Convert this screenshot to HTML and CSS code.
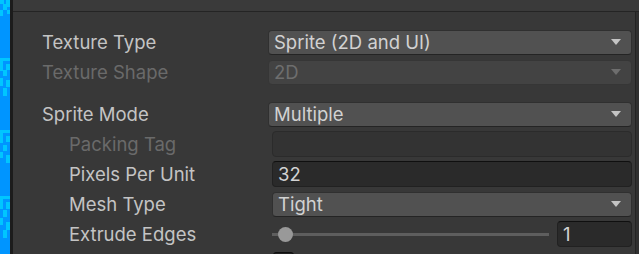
FILE: index.html
```html
<!DOCTYPE html>
<html lang="en">
<head>
  <meta charset="UTF-8">
  <title>Texture Import Settings</title>
  <link rel="stylesheet" href="styles.css">
</head>
<body>

  <!-- Scene view edge (pixel art) -->
  <div class="scene-strip">
    <svg width="10" height="254" viewBox="0 0 10 254" shape-rendering="crispEdges">
      <rect x="0" y="0" width="10" height="254" fill="#0095ff"/>
      <g fill="#00c6ff">
        <rect x="0" y="0" width="4" height="4"/>
        <rect x="6" y="0" width="4" height="7"/>
        <rect x="3" y="4" width="4" height="6"/>
        <rect x="0" y="10" width="3" height="6"/>
        <rect x="7" y="10" width="3" height="4"/>

        <rect x="0" y="58" width="10" height="3"/>
        <rect x="0" y="61" width="3" height="10"/>
        <rect x="6" y="64" width="4" height="6"/>
        <rect x="3" y="70" width="4" height="6"/>
        <rect x="0" y="78" width="3" height="8"/>
        <rect x="6" y="80" width="4" height="7"/>
        <rect x="3" y="88" width="4" height="8"/>

        <rect x="0" y="130" width="10" height="3"/>
        <rect x="0" y="133" width="3" height="10"/>
        <rect x="6" y="136" width="4" height="6"/>
        <rect x="3" y="145" width="4" height="6"/>
        <rect x="0" y="152" width="3" height="6"/>
        <rect x="6" y="155" width="4" height="8"/>

        <rect x="0" y="196" width="10" height="3"/>
        <rect x="0" y="199" width="3" height="10"/>
        <rect x="6" y="202" width="4" height="7"/>
        <rect x="3" y="210" width="4" height="7"/>
        <rect x="0" y="218" width="3" height="7"/>
        <rect x="6" y="222" width="4" height="8"/>
        <rect x="3" y="230" width="4" height="8"/>
      </g>
    </svg>
  </div>

  <div class="inspector">
    <div class="inspector-top"></div>

    <div class="inspector-body">
      <div class="settings">

        <div class="row">
          <span class="label">Texture Type</span>
          <div class="popup">
            <span>Sprite (2D and UI)</span>
            <span class="arrow"></span>
          </div>
        </div>

        <div class="row disabled">
          <span class="label">Texture Shape</span>
          <div class="popup">
            <span>2D</span>
            <span class="arrow"></span>
          </div>
        </div>

        <div class="row spaced">
          <span class="label">Sprite Mode</span>
          <div class="popup">
            <span>Multiple</span>
            <span class="arrow"></span>
          </div>
        </div>

        <div class="row indent disabled">
          <span class="label">Packing Tag</span>
          <div class="field"></div>
        </div>

        <div class="row indent">
          <span class="label">Pixels Per Unit</span>
          <div class="field">32</div>
        </div>

        <div class="row indent">
          <span class="label">Mesh Type</span>
          <div class="popup">
            <span>Tight</span>
            <span class="arrow"></span>
          </div>
        </div>

        <div class="row indent">
          <span class="label">Extrude Edges</span>
          <div class="slider">
            <div class="track">
              <span class="knob"></span>
            </div>
            <div class="field small">1</div>
          </div>
        </div>

        <div class="row indent">
          <span class="label"></span>
          <div class="check"></div>
        </div>

      </div>
      <div class="scrollbar"></div>
    </div>
  </div>

</body>
</html>
```

FILE: styles.css
```css
html, body {
  height: 100%;
}

body {
  margin: 0;
  display: flex;
  overflow: hidden;
  background: #383838;
  font-family: Inter, "Noto Sans", sans-serif;
  font-size: 18.5px;
  color: #c4c4c4;
}

.scene-strip {
  width: 10px;
  border-right: 3px solid #1c1c1c;
  flex-shrink: 0;
}

.scene-strip svg {
  display: block;
}

.inspector {
  flex: 1;
  display: flex;
  flex-direction: column;
}

.inspector-top {
  height: 11px;
  flex-shrink: 0;
  background: #3a3a3a;
  border-bottom: 1px solid #242424;
}

.inspector-body {
  flex: 1;
  display: flex;
}

.settings {
  flex: 1;
  padding: 15px 3px 0 29px;
}

.scrollbar {
  width: 3px;
  background: #303030;
  border-left: 1px solid #232323;
}

/* Rows */
.row {
  height: 30px;
  display: grid;
  grid-template-columns: 226px 1fr;
  align-items: center;
}

.row.spaced {
  margin-top: 12px;
}

.row.indent {
  grid-template-columns: 230px 1fr;
}

.row.indent .label {
  padding-left: 27px;
}

.label {
  white-space: nowrap;
  overflow: hidden;
}

.row.disabled .label {
  color: #6a6a6a;
}

/* Popup (dropdown) */
.popup {
  height: 23px;
  display: flex;
  align-items: center;
  justify-content: space-between;
  padding: 0 10px 0 5px;
  background: #515151;
  border: 1px solid #303030;
  border-bottom-color: #242424;
  border-radius: 4px;
  color: #d2d2d2;
}

.arrow {
  width: 0;
  height: 0;
  border-left: 5px solid transparent;
  border-right: 5px solid transparent;
  border-top: 6px solid #c4c4c4;
}

.row.disabled .popup {
  background: #434343;
  border-color: #363636;
  color: #6e6e6e;
}

.row.disabled .arrow {
  border-top-color: #6e6e6e;
}

/* Text field */
.field {
  height: 24px;
  display: flex;
  align-items: center;
  padding: 0 5px;
  background: #2a2a2a;
  border: 1px solid #212121;
  border-top-color: #0f0f0f;
  border-radius: 4px;
  color: #d2d2d2;
}

.row.disabled .field {
  background: #333333;
  border-color: #2b2b2b;
}

/* Slider */
.slider {
  display: flex;
  align-items: center;
  gap: 8px;
}

.track {
  flex: 1;
  height: 3px;
  background: #5e5e5e;
  position: relative;
}

.knob {
  position: absolute;
  left: 6px;
  top: -6px;
  width: 15px;
  height: 15px;
  border-radius: 50%;
  background: #999999;
}

.field.small {
  width: 63px;
  flex-shrink: 0;
}

/* Checkbox */
.check {
  align-self: start;
  margin-top: 3px;
  width: 19px;
  height: 19px;
  margin-left: 1px;
  background: #202020;
  border: 1px solid #0f0f0f;
  border-radius: 3px;
}
```
